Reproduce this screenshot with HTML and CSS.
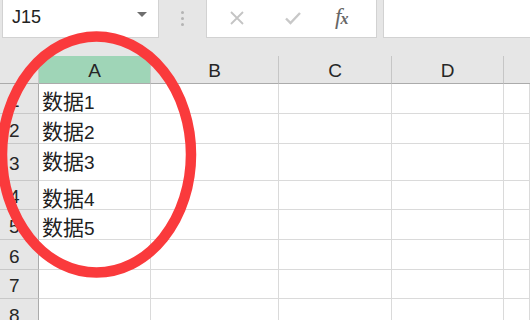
FILE: index.html
```html
<!DOCTYPE html>
<html lang="zh">
<head>
<meta charset="utf-8">
<link rel="stylesheet" href="styles.css">
</head>
<body>
<div class="top">
  <div class="namebox">
    <span class="nb-text">J15</span>
    <svg class="nb-arrow" width="10" height="6" viewBox="0 0 10 6"><path d="M0 0 H10 L5 5 Z" fill="#6e6e6e"/></svg>
  </div>
  <div class="sep">
    <span class="dot"></span><span class="dot"></span><span class="dot"></span>
  </div>
  <div class="fbtns">
    <svg class="ic" width="16" height="16" viewBox="0 0 16 16"><path d="M2 2 L14 14 M14 2 L2 14" stroke="#c4c4c4" stroke-width="1.8" fill="none"/></svg>
    <svg class="ic" width="18" height="16" viewBox="0 0 18 16"><path d="M2 8.5 L6.5 13 L16 3" stroke="#c8c8c8" stroke-width="2.4" fill="none"/></svg>
    <span class="fx">f<span class="fx-x">x</span></span>
  </div>
  <div class="finput"></div>
</div>
<div class="sheet">
  <div class="corner"></div>
  <div class="ch sel">A</div>
  <div class="ch">B</div>
  <div class="ch">C</div>
  <div class="ch">D</div>
  <div class="ch last"></div>

  <div class="rh">1</div><div class="c"><span class="zh">数据</span>1</div><div class="c"></div><div class="c"></div><div class="c"></div><div class="c"></div>
  <div class="rh">2</div><div class="c"><span class="zh">数据</span>2</div><div class="c"></div><div class="c"></div><div class="c"></div><div class="c"></div>
  <div class="rh">3</div><div class="c"><span class="zh">数据</span>3</div><div class="c"></div><div class="c"></div><div class="c"></div><div class="c"></div>
  <div class="rh">4</div><div class="c"><span class="zh">数据</span>4</div><div class="c"></div><div class="c"></div><div class="c"></div><div class="c"></div>
  <div class="rh">5</div><div class="c"><span class="zh">数据</span>5</div><div class="c"></div><div class="c"></div><div class="c"></div><div class="c"></div>
  <div class="rh">6</div><div class="c"></div><div class="c"></div><div class="c"></div><div class="c"></div><div class="c"></div>
  <div class="rh">7</div><div class="c"></div><div class="c"></div><div class="c"></div><div class="c"></div><div class="c"></div>
  <div class="rh">8</div><div class="c"></div><div class="c"></div><div class="c"></div><div class="c"></div><div class="c"></div>
</div>
<svg class="mark" width="530" height="320" viewBox="0 0 530 320">
  <ellipse cx="96.5" cy="154.5" rx="94.5" ry="118" fill="none" stroke="#fa3a3c" stroke-width="10.5"/>
</svg>
</body>
</html>
```
FILE: styles.css
```css
html, body {
  margin: 0;
  padding: 0;
}
body {
  width: 530px;
  height: 320px;
  overflow: hidden;
  background: #e6e6e6;
  font-family: "Liberation Sans", "Noto Sans CJK SC", sans-serif;
  color: #222;
  position: relative;
}
.top {
  display: flex;
  height: 38px;
  margin-bottom: 18px;
}
.namebox {
  margin-left: 2px;
  width: 157px;
  background: #fff;
  border: 1px solid #d2d2d2;
  border-top: none;
  display: flex;
  align-items: center;
  justify-content: space-between;
  padding: 0 11px 2px 9px;
  box-sizing: border-box;
}
.nb-text {
  font-size: 18px;
  color: #222;
}
.nb-arrow {
  margin-bottom: 5px;
}
.sep {
  width: 47px;
  display: flex;
  flex-direction: column;
  align-items: center;
  justify-content: center;
  gap: 3px;
  padding-bottom: 2px;
}
.dot {
  width: 3px;
  height: 3px;
  border-radius: 50%;
  background: #b4b4b4;
}
.fbtns {
  width: 171px;
  background: #fff;
  border: 1px solid #d2d2d2;
  border-top: none;
  box-sizing: border-box;
  display: flex;
  align-items: center;
  padding: 0 0 2px 22px;
  gap: 39px;
}
.ic {
  display: block;
}
.fx {
  font-family: "Liberation Serif", serif;
  font-style: italic;
  font-size: 23px;
  line-height: 24px;
  color: #666;
  margin-left: -6px;
  letter-spacing: -1px;
}
.fx-x {
  font-size: 16px;
  font-weight: bold;
}
.finput {
  flex: 1;
  margin-left: 6px;
  background: #fff;
  border: 1px solid #d2d2d2;
  border-top: none;
  border-right: none;
}
.sheet {
  display: grid;
  grid-template-columns: 39px 112px 128px 113px 112px 1fr;
  grid-template-rows: 28px 30px 30px 37px 29px 30px 30px 29px 30px;
}
.corner {
  background: #e6e6e6;
  border-right: 1px solid #c8c8c8;
  border-bottom: 1px solid #ababab;
}
.ch {
  background: #e6e6e6;
  border-right: 1px solid #c6c6c6;
  border-bottom: 1px solid #ababab;
  text-align: center;
  font-size: 19px;
  line-height: 27px;
  padding-top: 1px;
  color: #262626;
}
.ch.sel {
  background: #9fd5b7;
}
.ch.last {
  border-right: none;
}
.rh {
  background: #e6e6e6;
  border-right: 1px solid #ababab;
  border-bottom: 1px solid #c8c8c8;
  font-size: 19px;
  padding-left: 9px;
  display: flex;
  align-items: center;
  padding-top: 4px;
  color: #262626;
}
.c {
  background: #fff;
  border-right: 1px solid #dadada;
  border-bottom: 1px solid #dadada;
  font-size: 19px;
  line-height: 22px;
  padding: 5px 0 0 3px;
  white-space: nowrap;
}
.zh {
  font-family: "Noto Sans CJK SC", sans-serif;
  font-size: 21px;
}
.mark {
  position: absolute;
  left: 0;
  top: 0;
  pointer-events: none;
}
```
